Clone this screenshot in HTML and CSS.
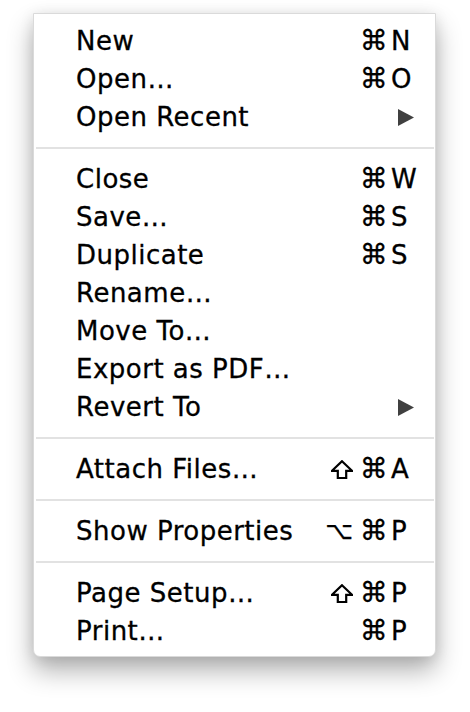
FILE: index.html
```html
<!DOCTYPE html>
<html>
<head>
<meta charset="utf-8">
<link rel="stylesheet" href="styles.css">
</head>
<body>
<div class="menu">
  <div class="item"><span class="label">New</span><span class="mods"><span class="cmd">⌘</span></span><span class="key">N</span></div>
  <div class="item"><span class="label">Open…</span><span class="mods"><span class="cmd">⌘</span></span><span class="key">O</span></div>
  <div class="item"><span class="label">Open Recent</span><span class="mods"></span><span class="key"><svg class="arrow" width="16" height="17" viewBox="0 0 16 17"><polygon points="0,0 16,8.5 0,17" fill="#404040"/></svg></span></div>
  <div class="sep"></div>
  <div class="item"><span class="label">Close</span><span class="mods"><span class="cmd">⌘</span></span><span class="key">W</span></div>
  <div class="item"><span class="label">Save…</span><span class="mods"><span class="cmd">⌘</span></span><span class="key">S</span></div>
  <div class="item"><span class="label">Duplicate</span><span class="mods"><span class="cmd">⌘</span></span><span class="key">S</span></div>
  <div class="item"><span class="label">Rename…</span><span class="mods"></span><span class="key"></span></div>
  <div class="item"><span class="label">Move To…</span><span class="mods"></span><span class="key"></span></div>
  <div class="item"><span class="label">Export as PDF…</span><span class="mods"></span><span class="key"></span></div>
  <div class="item"><span class="label">Revert To</span><span class="mods"></span><span class="key"><svg class="arrow" width="16" height="17" viewBox="0 0 16 17"><polygon points="0,0 16,8.5 0,17" fill="#404040"/></svg></span></div>
  <div class="sep"></div>
  <div class="item"><span class="label">Attach Files…</span><span class="mods"><svg class="shift" width="22" height="19" viewBox="0 0 22 19"><polygon points="11,1.2 21,10.8 15.2,10.8 15.2,18 6.8,18 6.8,10.8 1,10.8" fill="none" stroke="#000" stroke-width="2.2" stroke-linejoin="miter"/></svg><span class="cmd">⌘</span></span><span class="key">A</span></div>
  <div class="sep"></div>
  <div class="item"><span class="label">Show Properties</span><span class="mods"><span class="opt">⌥</span><span class="cmd">⌘</span></span><span class="key">P</span></div>
  <div class="sep"></div>
  <div class="item"><span class="label">Page Setup…</span><span class="mods"><svg class="shift" width="22" height="19" viewBox="0 0 22 19"><polygon points="11,1.2 21,10.8 15.2,10.8 15.2,18 6.8,18 6.8,10.8 1,10.8" fill="none" stroke="#000" stroke-width="2.2" stroke-linejoin="miter"/></svg><span class="cmd">⌘</span></span><span class="key">P</span></div>
  <div class="item"><span class="label">Print…</span><span class="mods"><span class="cmd">⌘</span></span><span class="key">P</span></div>
</div>
</body>
</html>
```

FILE: styles.css
```css
html, body {
  margin: 0;
  padding: 0;
  background: #ffffff;
}

html {
  height: 100%;
}

body {
  min-height: 712px;
  box-sizing: border-box;
  padding: 13px 0 0 33px;
  font-family: "DejaVu Sans", "Liberation Sans", sans-serif;
  color: #000;
}

.menu {
  width: 401px;
  background: #fff;
  border: 1px solid #dadada;
  border-radius: 0 0 7px 7px;
  padding: 8px 0 6px 0;
  box-shadow: 0 14px 26px rgba(0, 0, 0, 0.3), 0 2px 14px rgba(0, 0, 0, 0.1);
}

.item {
  display: grid;
  grid-template-columns: 1fr auto 44px;
  align-items: center;
  height: 38px;
  line-height: 38px;
  font-size: 26px;
  letter-spacing: 0.5px;
  padding-left: 42px;
  -webkit-text-stroke: 0.3px #000;
}

.label {
  white-space: nowrap;
}

.mods {
  display: flex;
  align-items: center;
  justify-content: flex-end;
  gap: 7px;
  padding-right: 3px;
}

.cmd {
  font-size: 28px;
  letter-spacing: 0;
  line-height: 38px;
}

.opt {
  font-size: 24px;
  letter-spacing: 0;
  line-height: 38px;
}

.shift {
  display: block;
  flex-shrink: 0;
  margin-top: 1px;
}

.key {
  text-align: left;
  display: flex;
  align-items: center;
}

.arrow {
  margin-left: 7px;
  display: block;
}

.sep {
  height: 2px;
  margin: 11px 1px 11px 2px;
  background: #e2e2e2;
}
```
